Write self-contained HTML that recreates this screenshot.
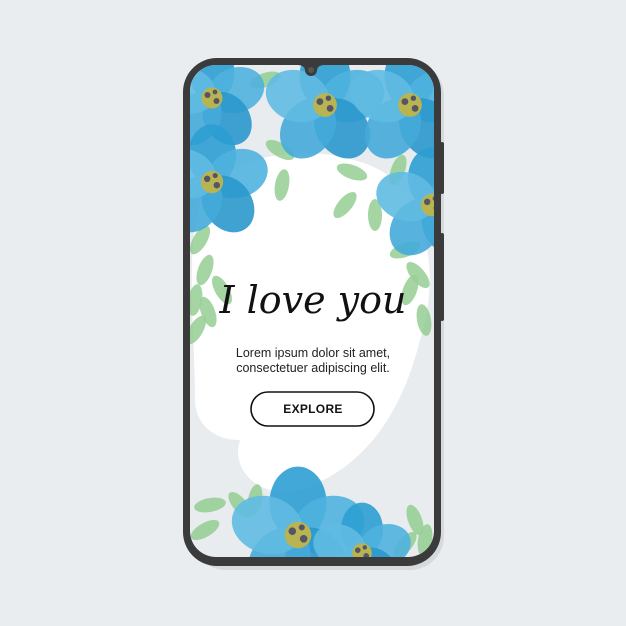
<!DOCTYPE html>
<html><head><meta charset="utf-8"><style>
html,body{margin:0;padding:0;background:#e9edf0;width:626px;height:626px;overflow:hidden}
svg{position:absolute;left:0;top:0}
.t{position:absolute;left:0;width:626px;text-align:center;font-family:"Liberation Sans",sans-serif;color:#222}
</style></head><body>
<svg width="626" height="626" viewBox="0 0 626 626">
<defs>
<clipPath id="scr"><rect x="190" y="65" width="244" height="492" rx="26"/></clipPath>
<g id="fl">
<ellipse cx="0" cy="-17" rx="15" ry="19" fill="#2e9fd3" opacity=".9"/>
<ellipse cx="0" cy="-17" rx="15" ry="19" fill="#4fb2de" opacity=".9" transform="rotate(72)"/>
<ellipse cx="0" cy="-17" rx="15" ry="19" fill="#2a98cc" opacity=".9" transform="rotate(144)"/>
<ellipse cx="0" cy="-17" rx="15" ry="19" fill="#45abd9" opacity=".9" transform="rotate(216)"/>
<ellipse cx="0" cy="-17" rx="15" ry="19" fill="#60bbe2" opacity=".9" transform="rotate(288)"/>
<circle r="7" fill="#b9b452"/><circle cx="-3" cy="-2" r="2" fill="#556"/><circle cx="3" cy="2" r="2" fill="#556"/><circle cx="2" cy="-4" r="1.6" fill="#556"/>
</g>
<ellipse id="lf" cx="0" cy="0" rx="7" ry="16" fill="#8fcb8c" opacity=".9"/>
</defs>
<rect x="192" y="62" width="252" height="508" rx="34" fill="#000" opacity=".08"/>
<rect x="183" y="58" width="258" height="508" rx="34" fill="#3b3b3b"/>
<rect x="440" y="142" width="4" height="52" rx="2" fill="#3b3b3b"/>
<rect x="440" y="233" width="4" height="88" rx="2" fill="#3b3b3b"/>
<rect x="190" y="65" width="244" height="492" rx="26" fill="#e8ecef"/>
<g clip-path="url(#scr)">
<path d="M200 200 C230 150 320 140 380 170 C430 200 440 280 420 340 C400 420 360 470 300 490 C260 500 230 470 240 440 C210 440 195 420 195 400 C195 330 185 260 200 200Z" fill="#fff"/>
<g fill="#8fcb8c" opacity=".9">
<use href="#lf" transform="translate(265,80) rotate(70)"/>
<use href="#lf" transform="translate(280,150) rotate(-60)"/>
<use href="#lf" transform="translate(282,185) rotate(10)"/>
<use href="#lf" transform="translate(352,172) rotate(-70)"/>
<use href="#lf" transform="translate(345,205) rotate(40)"/>
<use href="#lf" transform="translate(375,215) rotate(0)"/>
<use href="#lf" transform="translate(398,170) rotate(20)"/>
<use href="#lf" transform="translate(200,240) rotate(30)"/>
<use href="#lf" transform="translate(205,270) rotate(20)"/>
<use href="#lf" transform="translate(222,290) rotate(-30)"/>
<use href="#lf" transform="translate(195,300) rotate(10)"/>
<use href="#lf" transform="translate(208,312) rotate(-20)"/>
<use href="#lf" transform="translate(196,330) rotate(30)"/>
<use href="#lf" transform="translate(405,250) rotate(70)"/>
<use href="#lf" transform="translate(410,290) rotate(20)"/>
<use href="#lf" transform="translate(424,320) rotate(-10)"/>
<use href="#lf" transform="translate(418,275) rotate(-40)"/>
<use href="#lf" transform="translate(210,505) rotate(80)"/>
<use href="#lf" transform="translate(240,505) rotate(-40)"/>
<use href="#lf" transform="translate(255,500) rotate(10)"/>
<use href="#lf" transform="translate(205,530) rotate(60)"/>
<use href="#lf" transform="translate(415,520) rotate(-20)"/>
<use href="#lf" transform="translate(425,540) rotate(10)"/>
<use href="#lf" transform="translate(405,545) rotate(40)"/>
</g>
<use href="#fl" transform="translate(212,98) scale(1.5)"/>
<use href="#fl" transform="translate(325,105) scale(1.7)"/>
<use href="#fl" transform="translate(410,105) scale(1.7)"/>
<use href="#fl" transform="translate(212,182) scale(1.6)"/>
<use href="#fl" transform="translate(432,205) scale(1.6)"/>
<use href="#fl" transform="translate(298,535) scale(1.9)"/>
<use href="#fl" transform="translate(362,553) scale(1.4)"/>
</g>
<path d="M298 65 Q304 65 305 70 A6 6 0 0 0 317 70 Q318 65 324 65Z" fill="#3b3b3b"/>
<circle cx="311" cy="70" r="3" fill="#555"/>
<rect x="251" y="392" width="123" height="34" rx="17" fill="#fff" stroke="#111" stroke-width="1.6"/>
</svg>
<div class="t" style="top:278px;font-family:'DejaVu Serif','Liberation Serif',serif;font-style:italic;font-size:38px;color:#111">I love you</div>
<div class="t" style="top:346px;font-size:12.5px;line-height:15px">Lorem ipsum dolor sit amet,<br>consectetuer adipiscing elit.</div>
<div class="t" style="top:402px;font-size:12px;font-weight:bold;color:#111;letter-spacing:.3px">EXPLORE</div>
</body></html>
